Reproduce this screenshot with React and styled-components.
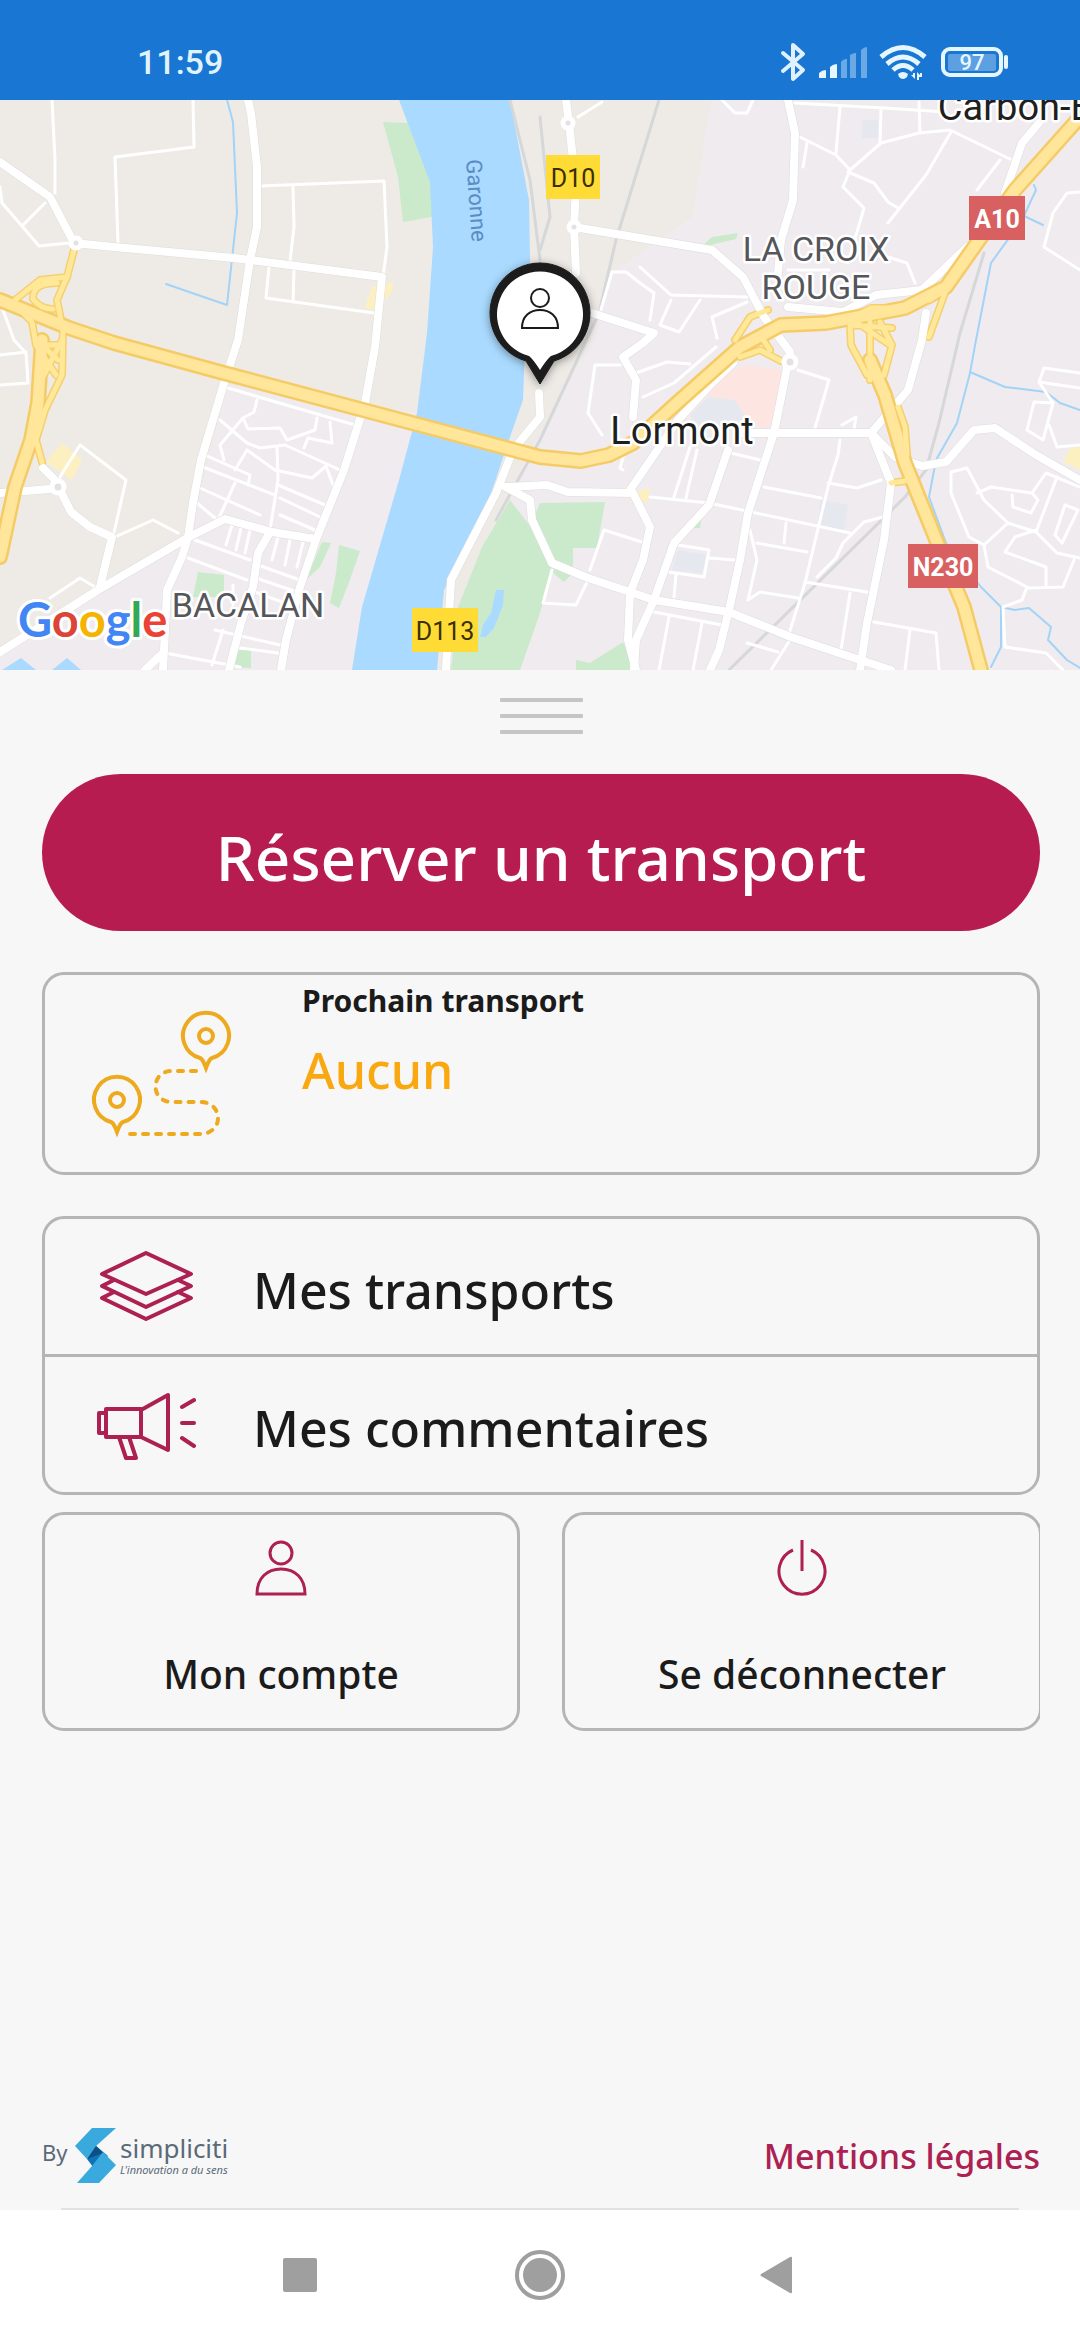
import React from "react";
import styled, { createGlobalStyle } from "styled-components";

const GlobalStyle = createGlobalStyle`
  * {
    box-sizing: border-box;
  }

  body {
    margin: 0;
    background: #f7f7f7;
    color: #1b1b1b;
    font-family: "Noto Sans", "Open Sans", sans-serif;
  }

  button {
    font: inherit;
    color: inherit;
    background: none;
    border: 0;
    padding: 0;
    cursor: pointer;
  }

  svg {
    display: block;
  }
`;

/* ---------- map data ---------- */

const urbanAreas = [
  "M711 100L692 217L612 273L592 340L520 470L460 670H1080V100Z",
  "M227 385L417 413L352 670H0V652L189 537Z",
];

const parks = [
  "M383 122L408 123L432 183V217L403 222L398 177Z",
  "M510 500L530 526L540 503L605 502L597 548H573V573L564 582L552 572L540 613L520 670H451L458 607L482 547Z",
  "M576 660L590 663L623 642L635 670H576Z",
  "M198 572L224 575V597H193Z",
  "M322 542L331 543L320 567L306 580Z",
  "M339 545L360 551L348 585L339 608L330 603L336 573Z",
  "M238 650H251V668L234 667Z",
  "M690 520L702 515L700 528H688Z",
  "M703 245L712 237L738 233L736 239L706 246Z",
];

const river =
  "M399 100L430 182L433 247L427 333L417 413L399 480L362 607L352 670H437L444 590L482 520L510 437L523 400L525 347L530 260L529 200L510 100Z";

const ponds = [
  "M496 590H504L503 605L494 628L486 637H480L483 625L491 613Z",
  "M2 670L21 658L36 670Z",
  "M52 670L67 658L81 670Z",
];

const streams = [
  "M227 100L233 122L237 213L227 305L166 284",
  "M1034 185L1036 190L1022 220L991 263L976 340L970 373L957 423L936 460L929 497L946 543L981 587L1001 607V647L991 667",
  "M970 372L1005 387L1046 392L1060 403L1080 410",
  "M1001 607L1015 610L1029 608L1051 627L1048 640L1067 660L1080 668",
  "M1022 215L1043 225",
];

const rails = [
  "M659 100L616 240L599 313L540 440L496 520",
  "M984 253L960 333L939 423L926 470L905 497L729 670",
  "M510 100L530 180L540 260",
  "M540 117L550 217L540 250",
];

const smallStreets = [
  "M52 100L55 160V193M193 100L194 147L115 157L118 243",
  "M260 186L384 181L387 247L383 277M293 186L294 227L290 262M269 267L266 298L374 313M294 270L293 302",
  "M0 187L2 203L22 226L39 246L69 243M45 203L22 226M3 310L14 340L26 353L28 383L0 385M0 355L26 352",
  "M228 388L355 425M257 400L254 412L243 418L220 445L224 460M220 420L247 443L260 448L285 445L340 470",
  "M243 418L248 429L280 428L287 440L315 430L317 418M330 422L332 443L308 438L304 448M277 448L278 480L270 530",
  "M247 450L235 470M247 450L275 470L312 478L326 466L333 485M205 455L250 475L248 485M203 467L275 495M278 485L325 505",
  "M280 498L320 517M200 488L260 515M235 483L218 520M197 503L215 518M280 515L315 530",
  "M195 540L250 560M188 558L247 580M258 565L300 580M256 578L297 592",
  "M232 525L226 545M241 528L236 550M250 530L245 553M278 537L272 560M290 540L285 565M303 542L297 567",
  "M215 630L280 645M165 653L240 667M223 630L212 665M240 648L278 653M233 585V605M250 590L290 605",
  "M115 537L153 520L178 533M113 537L126 480L80 445L58 480M50 598L80 578L95 587",
  "M722 100L735 113H747L753 100M795 103L884 108L946 112M840 107L836 153M881 110L880 143M919 102L920 133",
  "M800 137L836 155L850 170L881 143L919 133L950 130L1012 160M850 170L843 187L864 208L848 263M848 172L874 183L888 202L898 208",
  "M951 132L926 175L888 223M1000 160L977 190M888 257L907 263L915 283M807 143L803 167",
  "M1080 192L1067 193L1053 213L1044 247L1080 270M578 117L602 102M600 313L612 272H626L640 283L654 293L650 320",
  "M640 267L671 295L747 297M671 300L660 325L679 332L700 300M747 302L712 317L717 338M788 270H829",
  "M620 365L595 365L588 413L602 435M636 373L667 362L690 364M643 397L674 383L716 347M798 370L829 380L815 428",
  "M840 440L838 455L828 487L805 583L788 637M828 483L857 488L881 480M731 453L760 460M764 487L821 498M650 497L709 503L850 533",
  "M883 517L864 522L843 543L836 558L817 577M750 530L757 560L748 600L760 592L798 598M757 543L807 552M786 523L784 543",
  "M805 582L867 592M850 593L841 650M604 530L642 542M604 530L590 570M678 545L709 550L704 577L668 572M709 558L735 560M676 575L674 597",
  "M690 447L674 497M697 450L686 498M654 612L722 625M669 617L659 670M702 623L693 670M747 643L778 652M790 640L771 670",
  "M874 622L936 633L939 670M910 630L905 670M552 570L543 603L576 605L588 580M842 425L856 417L853 435",
  "M1080 388L1039 382L1044 368L1080 373M1039 382L1053 403L1034 402L1027 430L1043 440L1053 403M1049 425L1057 447L1080 445",
  "M951 472L967 468L984 500L1008 523L984 545L988 567L1027 587L1022 600L1003 607L1005 647L1046 653L1063 670",
  "M951 472V493L969 537L984 545M977 493L991 487L1032 493L1046 473L1080 487M1012 495L1013 507L1031 513L1038 500L1032 493",
  "M1008 523L1036 532L1057 477M1036 532L1057 553L1080 558M1036 530L1015 537L1005 552L1046 567V587M1027 588L1063 587L1074 560",
  "M623 470L620 468L628 440M1065 505L1055 535L1062 543L1078 510Z",
];

const mainStreets = [
  "M0 162L50 197L74 243L114 247L234 258L382 277L375 347L365 403L344 470L317 537L300 587L286 640L281 670",
  "M248 100L251 113L257 167V227L250 260L238 340L225 380L201 460L193 503L188 537L182 557L167 590L164 650L163 670",
  "M0 652L98 590L189 537L225 519L272 532L315 539",
  "M270 532L258 553L253 587L241 623L229 670",
  "M0 493L50 489M62 494L71 512L90 527L112 537L100 587M55 480L43 468M163 653L145 670",
  "M566 100L569 123L576 187L574 227L576 273M574 227L712 250L743 277L764 317L790 352L784 383L774 433L748 513L740 560L729 610L719 650L710 670",
  "M788 100L795 133L793 200L781 240L778 273",
  "M967 247L922 290L876 295L843 312L788 307M1039 123L1022 143L1005 193",
  "M926 313L922 340L908 390L871 433L774 433H740M871 433L891 483L884 540L867 623L860 670",
  "M871 433L895 457L922 466L946 462L974 430L995 428L1036 455L1080 480",
  "M506 487L547 485L568 492L633 493L650 527L643 560L630 593L628 640L636 670",
  "M728 450L709 505L674 543L654 600L636 640L634 670",
  "M506 487L530 500L532 520L552 563L588 578L654 600L729 612L791 637L860 660L891 670",
  "M539 393L540 417L513 450L496 493L451 580L446 670",
  "M733 363L712 383L678 420L630 490",
  "M643 343L623 357L636 380L633 417M654 333L592 313M643 343L654 333",
];

const ramps = [
  "M74 250L67 277L57 300L63 330L62 375L45 410L36 440L42 462",
  "M67 277L40 280L15 300M57 283Q32 283 33 299Q40 309 53 309",
  "M15 305L32 322L36 345L56 375M62 340L44 375M60 345L42 345L58 360",
  "M735 340L750 317L768 310M740 357L760 350L781 361M760 335L770 350",
  "M843 322L871 308L905 308M946 290L929 337M930 300L948 288",
  "M850 325L851 345L867 375M880 322L892 345L884 375M870 322V380M850 325L892 328M856 322L890 345",
  "M898 407L905 427L907 455M891 483L905 481",
];

const highways = [
  "M0 300L69 328L114 343L220 372L540 457L581 461L609 455L633 443L678 402L740 347L781 325L826 323L905 308L946 287L977 243L1015 190L1080 117",
  "M42 340L38 403L31 440L15 487L0 557",
  "M870 360L885 395L905 463L939 547L964 607L981 670",
];

const mapLabels = [
  { x: 682, y: 444, size: 38, color: "#1f1f1f", text: "Lormont" },
  { x: 816, y: 261, size: 34, color: "#55565a", text: "LA CROIX" },
  { x: 816, y: 299, size: 34, color: "#55565a", text: "ROUGE" },
  { x: 248, y: 617, size: 34, color: "#55565a", text: "BACALAN" },
  { x: 1016, y: 120, size: 38, color: "#1f1f1f", text: "Carbon-B" },
];

const roadShields = [
  { x: 546, y: 155, w: 54, text: "D10", yellow: true },
  { x: 412, y: 608, w: 66, text: "D113", yellow: true },
  { x: 969, y: 196, w: 56, text: "A10" },
  { x: 908, y: 544, w: 70, text: "N230" },
];

/* ---------- map ---------- */

const Lines = ({ paths, color, width }) => (
  <g
    fill="none"
    stroke={color}
    strokeWidth={width}
    strokeLinejoin="round"
    strokeLinecap="round"
  >
    {paths.map((d) => (
      <path key={d} d={d} />
    ))}
  </g>
);

const Shapes = ({ paths, color }) => (
  <g fill={color}>
    {paths.map((d) => (
      <path key={d} d={d} />
    ))}
  </g>
);

const CityMap = () => (
  <MapFrame>
    <MapDrawing
      viewBox="0 100 1080 570"
      preserveAspectRatio="xMidYMid slice"
      role="img"
      aria-label="Carte"
    >
      <defs>
        <filter id="pinShadow" x="-20%" y="-20%" width="140%" height="140%">
          <feDropShadow dx="0" dy="2" stdDeviation="5" floodOpacity="0.4" />
        </filter>
      </defs>
      <rect y="100" width="1080" height="570" fill="#eeebe6" />
      <Shapes paths={urbanAreas} color="#efebef" />
      <path d="M712 377L747 365L781 370V400L767 430L740 417L709 397Z" fill="#fde5e1" />
      <g fill="#e6e8ef">
        <path d="M709 397L735 400L748 420L700 430L690 415Z" />
        <path d="M820 500L848 505L844 530L818 525Z" />
        <path d="M678 550L706 555L702 573L672 570Z" />
        <path d="M862 120H878V138H862Z" />
      </g>
      <g fill="#fdf0c0">
        <path d="M62 443L82 460L72 480L46 462Z" />
        <path d="M372 287L393 282L392 292L374 310L365 308Z" />
        <path d="M625 495L650 488L648 502L632 500Z" />
        <path d="M1068 450L1080 446V470L1064 462Z" />
      </g>
      <Shapes paths={parks} color="#cbeacb" />
      <path d={river} fill="#aadaff" />
      <Shapes paths={ponds} color="#aadaff" />
      <Lines paths={streams} color="#a3d3f7" width={2} />
      <Lines paths={rails} color="#d5d7d9" width={3} />
      <Lines paths={smallStreets} color="#ffffff" width={3} />
      <Lines paths={mainStreets} color="#dedcdc" width={9} />
      <Lines paths={ramps} color="#f6cf6f" width={8} />
      <Lines paths={mainStreets} color="#ffffff" width={8} />
      <Lines paths={highways} color="#f5cb66" width={16} />
      <Lines paths={ramps} color="#ffe898" width={5} />
      <Lines paths={highways} color="#ffe69a" width={11} />
      <g fill="#e3e1e4" stroke="#fff" strokeWidth="5">
        <circle cx="76" cy="243" r="5" />
        <circle cx="58" cy="487" r="6" />
        <circle cx="568" cy="123" r="5" />
        <circle cx="574" cy="227" r="5" />
        <circle cx="790" cy="362" r="6" />
      </g>

      <RiverLabel x="0" y="0" transform="translate(469 201) rotate(86)">
        Garonne
      </RiverLabel>
      {mapLabels.map((label) => (
        <PlaceLabel
          key={label.text}
          x={label.x}
          y={label.y}
          fontSize={label.size}
          fill={label.color}
        >
          {label.text}
        </PlaceLabel>
      ))}
      {roadShields.map((road) => (
        <g key={road.text}>
          <rect
            x={road.x}
            y={road.y}
            width={road.w}
            height="44"
            fill={road.yellow ? "#ffdc35" : "#d96060"}
          />
          <ShieldText x={road.x + road.w / 2} y={road.y + 32} $yellow={road.yellow}>
            {road.text}
          </ShieldText>
        </g>
      ))}
      <GoogleText x="18" y="637">
        <tspan fill="#4285f4">G</tspan>
        <tspan fill="#db4437">o</tspan>
        <tspan fill="#f4b400">o</tspan>
        <tspan fill="#4285f4">g</tspan>
        <tspan fill="#34a853">l</tspan>
        <tspan fill="#ea4335">e</tspan>
      </GoogleText>

      <g filter="url(#pinShadow)">
        <path
          d="M526 361A50 50 0 1 1 554 361L540 384Z"
          fill="#1b1b1b"
          stroke="#1b1b1b"
          strokeWidth="1"
        />
      </g>
      <path d="M529 356A43 43 0 1 1 551 356Q547 359 540 370Q533 359 529 356Z" fill="#fff" />
      <g fill="none" stroke="#1b1b1b" strokeWidth="2">
        <circle cx="540" cy="298" r="9" />
        <path d="M522 328C522 316 530 310 540 310S558 316 558 328Z" />
      </g>
    </MapDrawing>
  </MapFrame>
);

/* ---------- icons ---------- */

const StatusIcons = () => (
  <svg width="230" height="40" viewBox="0 0 230 40" aria-hidden="true">
    <path
      d="M3 11L23 28L13 37V3L23 12L3 29"
      fill="none"
      stroke="#dff1fd"
      strokeWidth="4"
      strokeLinejoin="round"
      strokeLinecap="round"
    />
    <g fill="#e6f6ff">
      <path d="M39 36V31Q42 28 46 28V36Z" />
      <path d="M50 36V25Q53 22 57 22V36Z" />
      <g opacity="0.4">
        <path d="M61 36V20Q63 17 67 17V36Z" />
        <path d="M70 36V13Q73 11 76 11V36Z" />
        <path d="M81 36V8Q84 5 87 5V36Z" />
      </g>
      <path d="M118 32Q123 28 128 32L127 35Q123 39 119 35Z" />
      <path d="M133 31H135V37L131 33H133ZM137 38V30L140 33V31H142V35H139V38Z" />
    </g>
    <g fill="none" stroke="#e6f6ff" strokeWidth="5">
      <path d="M101 15Q123 -4 145 15" />
      <path d="M107 22Q123 8 139 22" />
      <path d="M113 28Q123 19 133 28" />
    </g>
    <rect
      x="163"
      y="7"
      width="58"
      height="26"
      rx="7"
      fill="none"
      stroke="#e6f6ff"
      strokeWidth="4"
    />
    <rect x="168" y="12" width="48" height="17" rx="2" fill="#e6f6ff" opacity="0.33" />
    <path d="M226 15V25" stroke="#e6f6ff" strokeWidth="4" strokeLinecap="round" />
    <BatteryText x="192" y="28">
      97
    </BatteryText>
  </svg>
);

const pinPath =
  "M-6 22A23 23 0 1 1 6 22C3 23 2 27 0 32C-2 27 -3 23 -6 22Z";

const RouteIcon = () => (
  <svg width="148" height="130" viewBox="0 0 148 130" aria-hidden="true">
    <g fill="none" stroke="#eeaa1e" strokeWidth="4">
      <g transform="translate(118 28)">
        <path d={pinPath} />
        <circle r="7" />
      </g>
      <g transform="translate(29 92)">
        <path d={pinPath} />
        <circle r="7" />
      </g>
      <path
        d="M108 63H84C62 63 62 94 84 94H112C136 94 136 126 112 126H41"
        strokeDasharray="5 8"
        strokeLinecap="round"
      />
    </g>
  </svg>
);

const LayersIcon = () => (
  <RowIcon viewBox="0 0 100 72" aria-hidden="true">
    <path d="M50 3L95 24L50 44L6 24Z" />
    <path d="M18 30L6 36L50 57L95 36L82 30" />
    <path d="M18 42L6 48L50 69L95 48L82 42" />
  </RowIcon>
);

const MegaphoneIcon = () => (
  <RowIcon viewBox="0 0 100 72" aria-hidden="true">
    <path d="M10 25H3V45H10M10 21H45V49H10ZM45 22L72 7V62L45 49M23 49L30 70H40L33 49" />
    <path d="M86 19L98 12M86 35H98M86 50L98 58" />
  </RowIcon>
);

const PersonIcon = () => (
  <TileSvg viewBox="0 0 52 56" aria-hidden="true">
    <circle cx="26" cy="13" r="11" />
    <path d="M2 54C2 38 12 29 26 29S50 38 50 54Z" />
  </TileSvg>
);

const PowerIcon = () => (
  <TileSvg viewBox="0 0 52 56" aria-hidden="true">
    <path d="M26 0V31M17 10A23 23 0 1 0 35 10" />
  </TileSvg>
);

const SimplicitiMark = () => (
  <svg width="41" height="55" viewBox="0 0 41 55" aria-hidden="true">
    <path d="M12 31L20 17L33 28L18 39Z" fill="#0f74b5" />
    <path d="M12 31L20 17L28 25Z" fill="#0b4f84" />
    <path d="M17 0H41L21 18L12 31L0 18Z" fill="#3aa9dd" />
    <path d="M28 24L41 37L24 55H2L17 38Z" fill="#3aa9dd" />
  </svg>
);

/* ---------- page ---------- */

const App = () => (
  <Page>
    <GlobalStyle />
    <StatusBar>
      <Clock>11:59</Clock>
      <StatusIcons />
    </StatusBar>
    <CityMap />
    <Sheet>
      <Handle aria-label="Agrandir">
        <span />
        <span />
        <span />
      </Handle>
      <BookButton>Réserver un transport</BookButton>
      <NextCard>
        <RouteIcon />
        <NextInfo>
          <NextTitle>Prochain transport</NextTitle>
          <NextValue>Aucun</NextValue>
        </NextInfo>
      </NextCard>
      <MenuCard>
        <MenuRow>
          <LayersIcon />
          <MenuLabel>Mes transports</MenuLabel>
        </MenuRow>
        <MenuRow>
          <MegaphoneIcon />
          <MenuLabel>Mes commentaires</MenuLabel>
        </MenuRow>
      </MenuCard>
      <Tiles>
        <Tile>
          <PersonIcon />
          Mon compte
        </Tile>
        <Tile $clipped>
          <PowerIcon />
          Se déconnecter
        </Tile>
      </Tiles>
      <Footer>
        <Brand>
          <By>By</By>
          <SimplicitiMark />
          <BrandWords>
            <BrandName>simpliciti</BrandName>
            <Tagline>L'innovation a du sens</Tagline>
          </BrandWords>
        </Brand>
        <LegalLink href="#">Mentions légales</LegalLink>
      </Footer>
    </Sheet>
    <NavDivider />
    <NavBar>
      <NavButton aria-label="Applications récentes">
        <svg width="60" height="60" viewBox="0 0 60 60">
          <rect x="13" y="13" width="34" height="34" rx="2" />
        </svg>
      </NavButton>
      <NavButton aria-label="Accueil">
        <svg width="60" height="60" viewBox="0 0 60 60">
          <circle cx="30" cy="30" r="17" />
          <circle cx="30" cy="30" r="23" fill="none" stroke="#9f9f9f" strokeWidth="4" />
        </svg>
      </NavButton>
      <NavButton aria-label="Retour">
        <svg width="60" height="60" viewBox="0 0 60 60">
          <path d="M11 29L40 12Q42 11 42 13V47Q42 49 40 48L11 31Q10 30 11 29Z" />
        </svg>
      </NavButton>
    </NavBar>
  </Page>
);

const Page = styled.div`
  min-height: 100vh;
  display: flex;
  flex-direction: column;
`;

const StatusBar = styled.header`
  display: flex;
  align-items: center;
  justify-content: space-between;
  height: 100px;
  padding: 24px 70px 0 137px;
  background: #1976d3;
`;

const Clock = styled.time`
  color: #e0f4ff;
  font-family: Roboto, sans-serif;
  font-size: 34px;
  font-weight: 500;
  line-height: 40px;
`;

const BatteryText = styled.text`
  fill: #e6f6ff;
  font-family: Roboto, sans-serif;
  font-size: 22px;
  font-weight: 500;
  text-anchor: middle;
`;

const MapFrame = styled.div`
  height: 570px;
  overflow: hidden;
`;

const MapDrawing = styled.svg`
  width: 100%;
  height: 100%;
`;

const PlaceLabel = styled.text`
  font-family: Roboto, sans-serif;
  text-anchor: middle;
  stroke: #ffffff;
  stroke-width: 5px;
  stroke-linejoin: round;
  paint-order: stroke;
`;

const RiverLabel = styled.text`
  fill: #5b8cc4;
  font-family: Roboto, sans-serif;
  font-size: 22px;
  text-anchor: middle;
`;

const ShieldText = styled.text`
  fill: ${(props) => (props.$yellow ? "#3a3000" : "#ffffff")};
  font-family: Roboto, sans-serif;
  font-size: 25px;
  font-weight: ${(props) => (props.$yellow ? 400 : 700)};
  text-anchor: middle;
`;

const GoogleText = styled.text`
  font-family: Lato, sans-serif;
  font-size: 47px;
  font-weight: 700;
  stroke: #ffffff;
  stroke-width: 6px;
  stroke-linejoin: round;
  paint-order: stroke;
`;

const Sheet = styled.main`
  flex: 1;
  display: flex;
  flex-direction: column;
  padding: 28px 40px 0 42px;
  background: #f7f7f7;
`;

const Handle = styled.button`
  align-self: center;
  display: flex;
  flex-direction: column;
  gap: 12px;
  margin-bottom: 40px;

  span {
    width: 83px;
    height: 4px;
    border-radius: 1px;
    background: #c5c5c5;
  }
`;

const BookButton = styled.button`
  && {
    padding: 43px 20px 34px;
    border-radius: 79px;
    background: #b71c51;
    color: #ffffff;
    font-size: 62px;
    font-weight: 500;
    line-height: 80px;
  }
`;

const NextCard = styled.section`
  display: flex;
  gap: 66px;
  margin-top: 41px;
  padding: 0 43px;
  height: 203px;
  border: 3px solid #b5b5b5;
  border-radius: 22px;

  > svg {
    margin-top: 33px;
  }
`;

const NextInfo = styled.div`
  padding-top: 6px;
`;

const NextTitle = styled.h2`
  margin: 0;
  font-size: 30px;
  font-weight: 700;
  line-height: 40px;
`;

const NextValue = styled.p`
  margin: 13px 0 0;
  color: #faa80f;
  font-size: 50px;
  font-weight: 500;
  line-height: 72px;
`;

const MenuCard = styled.nav`
  margin-top: 41px;
  border: 3px solid #b5b5b5;
  border-radius: 22px;
`;

const MenuRow = styled.button`
  && {
    display: flex;
    align-items: center;
    gap: 57px;
    width: 100%;
    padding: 27px 51px 28px;
  }

  && + && {
    border-top: 3px solid #b5b5b5;
  }
`;

const MenuLabel = styled.span`
  padding-top: 8px;
  font-size: 50px;
  font-weight: 500;
  line-height: 72px;
`;

const RowIcon = styled.svg`
  width: 100px;
  height: 72px;
  fill: none;
  stroke: #ad2052;
  stroke-width: 4px;
  stroke-linejoin: round;
  stroke-linecap: round;
`;

const Tiles = styled.div`
  display: grid;
  grid-template-columns: 1fr 1fr;
  gap: 42px;
  margin-top: 17px;
`;

const Tile = styled.button`
  && {
    display: flex;
    flex-direction: column;
    align-items: center;
    gap: 50px;
    padding: 25px 0 26px;
    border: 3px solid #b5b5b5;
    border-radius: 22px;
    font-size: 39px;
    font-weight: 500;
    line-height: 56px;
    margin-right: ${(props) => (props.$clipped ? "-2px" : "0")};
    clip-path: ${(props) => (props.$clipped ? "inset(0 2px 0 0)" : "none")};
  }
`;

const TileSvg = styled.svg`
  width: 52px;
  height: 56px;
  fill: none;
  stroke: #ad2052;
  stroke-width: 3px;
`;

const Footer = styled.footer`
  display: flex;
  align-items: center;
  justify-content: space-between;
  margin-top: auto;
  padding: 40px 0 25px;
`;

const Brand = styled.div`
  display: flex;
  align-items: center;
  color: #5a6b77;
`;

const By = styled.span`
  width: 33px;
  font-size: 22px;
  line-height: 32px;
  padding-bottom: 8px;
`;

const BrandWords = styled.div`
  display: flex;
  flex-direction: column;
  padding-left: 4px;
`;

const BrandName = styled.span`
  font-size: 26px;
  line-height: 28px;
`;

const Tagline = styled.span`
  font-size: 11px;
  font-style: italic;
  line-height: 16px;
`;

const LegalLink = styled.a`
  color: #ad2052;
  font-size: 34px;
  font-weight: 500;
  line-height: 48px;
  text-decoration: none;
`;

const NavDivider = styled.div`
  height: 2px;
  padding: 0 61px;
  background: #e2e2e2 content-box;
`;

const NavBar = styled.nav`
  display: flex;
  justify-content: center;
  gap: 180px;
  padding: 35px 0;
  background: #ffffff;
`;

const NavButton = styled.button`
  svg {
    fill: #9f9f9f;
  }
`;

export default App;
